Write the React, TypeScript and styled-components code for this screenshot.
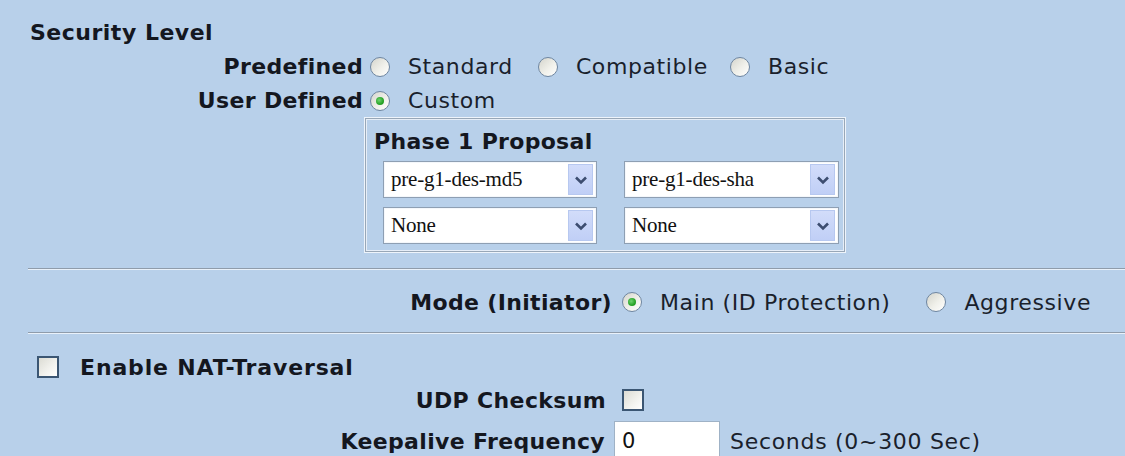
import styled, { createGlobalStyle } from "styled-components";

const GlobalStyle = createGlobalStyle`
  html, body {
    margin: 0;
    padding: 0;
    background: #b8d0ea;
  }
  body {
    font-family: "DejaVu Sans", Verdana, sans-serif;
    color: #14171f;
    overflow: hidden;
  }
`;

const Page = styled.div`
  width: 1125px;
  height: 456px;
  padding-top: 16px;
  box-sizing: border-box;
`;

const SectionTitle = styled.div`
  height: 33px;
  line-height: 33px;
  padding-left: 30px;
  font-size: 22px;
  font-weight: bold;
  letter-spacing: 0.5px;
`;

const FieldRow = styled.div<{ $height?: number; $top?: number }>`
  display: flex;
  align-items: center;
  height: ${({ $height }) => $height ?? 35}px;
  margin-top: ${({ $top }) => $top ?? 0}px;
`;

const FieldLabel = styled.div<{ $width: number; $gap: number }>`
  width: ${({ $width }) => $width}px;
  margin-right: ${({ $gap }) => $gap}px;
  flex-shrink: 0;
  text-align: right;
  font-size: 22px;
  font-weight: bold;
  letter-spacing: 0.35px;
  white-space: nowrap;
`;

const CheckLabel = styled.span`
  font-size: 22px;
  font-weight: bold;
  letter-spacing: 0.85px;
  white-space: nowrap;
`;

const Option = styled.label<{ $after?: number }>`
  display: flex;
  align-items: center;
  margin-right: ${({ $after }) => $after ?? 25}px;
`;

const OptionText = styled.span`
  font-size: 22px;
  letter-spacing: 0.6px;
  color: #1a1f2c;
  white-space: nowrap;
`;

const RadioDot = styled.span<{ $checked?: boolean }>`
  position: relative;
  width: 20px;
  height: 20px;
  margin-right: 18px;
  border-radius: 50%;
  border: 1px solid #6f86a0;
  box-sizing: border-box;
  background: linear-gradient(135deg, #d4d4cc 0%, #f0f0ea 55%, #ffffff 100%);
  flex-shrink: 0;

  &::after {
    content: "";
    display: ${({ $checked }) => ($checked ? "block" : "none")};
    position: absolute;
    left: 5px;
    top: 5px;
    width: 8px;
    height: 8px;
    border-radius: 50%;
    background: radial-gradient(circle at 40% 40%, #6fd36f 0%, #27a327 60%, #1c8a1c 100%);
  }
`;

const CheckBox = styled.span<{ $left?: number; $gap: number }>`
  width: 22px;
  height: 22px;
  margin-left: ${({ $left }) => $left ?? 0}px;
  margin-right: ${({ $gap }) => $gap}px;
  border: 2px solid #3b5673;
  box-sizing: border-box;
  background: linear-gradient(135deg, #dcdcd4 0%, #f3f3ef 60%, #ffffff 100%);
  flex-shrink: 0;
`;

const ProposalBox = styled.div`
  margin-left: 364px;
  width: 482px;
  height: 136px;
  box-sizing: border-box;
  border: 1px solid #eef4fb;
  box-shadow: inset 0 0 0 1px #98a7b7, inset 0 0 0 2px #e6eef8;
  padding: 2px 0 0 18px;
`;

const ProposalTitle = styled.div`
  height: 41px;
  line-height: 44px;
  margin-left: -9px;
  font-size: 22px;
  font-weight: bold;
  letter-spacing: 0.3px;
`;

const SelectGrid = styled.div`
  display: grid;
  grid-template-columns: 214px 215px;
  column-gap: 27px;
  row-gap: 9px;
`;

const SelectBox = styled.div`
  display: flex;
  align-items: center;
  height: 37px;
  box-sizing: border-box;
  border: 1px solid #8e9fb3;
  box-shadow: inset 0 0 0 1px #f4f7fb;
  background: #fff;
  padding: 0 3px 0 7px;
`;

const SelectValue = styled.span`
  flex: 1;
  font-family: "Liberation Serif", "Times New Roman", serif;
  font-size: 21px;
  color: #111;
  letter-spacing: -0.2px;
  white-space: nowrap;
`;

const SelectButton = styled.span`
  display: flex;
  align-items: center;
  justify-content: center;
  width: 25px;
  height: 31px;
  background: linear-gradient(180deg, #d2dcfa 0%, #c0cff6 100%);
  border: 1px solid #b7c8f0;
  box-sizing: border-box;
`;

const Separator = styled.div<{ $top: number }>`
  margin: ${({ $top }) => $top}px 0 0 28px;
  height: 1px;
  background: #8f9cab;
  border-bottom: 1px solid #e9f1fa;
`;

const TextInput = styled.div`
  width: 106px;
  height: 40px;
  box-sizing: border-box;
  border: 1px solid #9fb2c6;
  background: #fff;
  padding-left: 7px;
  font-size: 21px;
  line-height: 38px;
  color: #111;
`;

const Hint = styled.span`
  margin-left: 10px;
  font-size: 22px;
  letter-spacing: 0.7px;
  color: #1a1f2c;
  white-space: nowrap;
`;

const Chevron = () => (
  <svg width="14" height="10" viewBox="0 0 14 10">
    <path d="M2 2.5 L7 7.5 L12 2.5" fill="none" stroke="#3d4d70" strokeWidth="2.6" />
  </svg>
);

const Radio = ({ label, checked, after }: { label: string; checked?: boolean; after?: number }) => (
  <Option $after={after}>
    <RadioDot $checked={checked} />
    <OptionText>{label}</OptionText>
  </Option>
);

const Select = ({ value }: { value: string }) => (
  <SelectBox>
    <SelectValue>{value}</SelectValue>
    <SelectButton>
      <Chevron />
    </SelectButton>
  </SelectBox>
);

const proposals = ["pre-g1-des-md5", "pre-g1-des-sha", "None", "None"];

export default function App() {
  return (
    <Page>
      <GlobalStyle />
      <SectionTitle>Security Level</SectionTitle>
      <FieldRow>
        <FieldLabel $width={363} $gap={7}>Predefined</FieldLabel>
        <Radio label="Standard" />
        <Radio label="Compatible" after={22} />
        <Radio label="Basic" />
      </FieldRow>
      <FieldRow $height={33}>
        <FieldLabel $width={363} $gap={7}>User Defined</FieldLabel>
        <Radio label="Custom" checked />
      </FieldRow>
      <ProposalBox>
        <ProposalTitle>Phase 1 Proposal</ProposalTitle>
        <SelectGrid>
          {proposals.map((p, i) => (
            <Select key={i} value={p} />
          ))}
        </SelectGrid>
      </ProposalBox>

      <Separator $top={15} />
      <FieldRow $top={15} $height={34}>
        <FieldLabel $width={612} $gap={10}>Mode (Initiator)</FieldLabel>
        <Radio label="Main (ID Protection)" checked after={36} />
        <Radio label="Aggressive" />
      </FieldRow>
      <Separator $top={13} />

      <FieldRow $top={16} $height={34}>
        <CheckBox $left={37} $gap={21} />
        <CheckLabel>Enable NAT-Traversal</CheckLabel>
      </FieldRow>
      <FieldRow $height={32}>
        <FieldLabel $width={606} $gap={16}>UDP Checksum</FieldLabel>
        <CheckBox $gap={0} />
      </FieldRow>
      <FieldRow $height={50}>
        <FieldLabel $width={605} $gap={9}>Keepalive Frequency</FieldLabel>
        <TextInput>0</TextInput>
        <Hint>Seconds (0~300 Sec)</Hint>
      </FieldRow>
    </Page>
  );
}
